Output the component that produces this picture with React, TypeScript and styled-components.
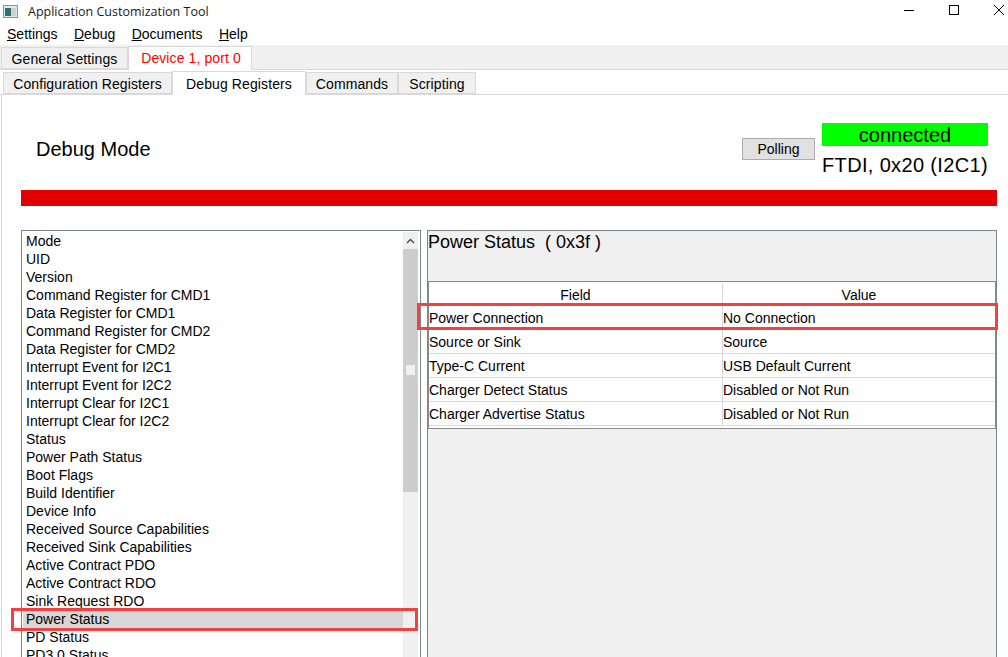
import styled, { createGlobalStyle } from "styled-components";

const GlobalStyle = createGlobalStyle`
  html, body {
    margin: 0;
    height: 657px;
    overflow: hidden;
    background: #fff;
    font-family: "Liberation Sans", Arial, sans-serif;
    font-size: 14px;
    color: #000;
  }
`;

const Window = styled.div`
  width: 1008px;
  height: 657px;
  display: flex;
  flex-direction: column;
  overflow: hidden;
`;

const TitleBar = styled.div`
  height: 22px;
  flex: none;
  display: flex;
  align-items: center;
  padding-left: 3px;
`;

const TitleText = styled.span`
  margin-left: 10px;
  font-family: "Open Sans", sans-serif;
  font-size: 12.5px;
  color: #1a1a1a;
`;

const WindowButtons = styled.div`
  margin-left: auto;
  display: flex;
  gap: 35px;
  padding-right: 4px;
  margin-top: -1px;
`;

const MenuBar = styled.div`
  height: 23px;
  flex: none;
  display: flex;
  align-items: center;
  gap: 16.4px;
  padding-left: 7px;
`;

const MenuItem = styled.span`
  font-size: 14px;
`;

const TopTabs = styled.div`
  height: 24px;
  flex: none;
  display: flex;
  align-items: flex-end;
  padding-left: 1px;
  background: #f0f0f0;
  border-bottom: 1px solid #d9d9d9;
`;

const TopTab = styled.div<{ $active?: boolean }>`
  box-sizing: border-box;
  height: ${(p) => (p.$active ? "24px" : "22px")};
  width: ${(p) => (p.$active ? "124px" : "127px")};
  margin-bottom: ${(p) => (p.$active ? "-1px" : "0")};
  padding: ${(p) => (p.$active ? "0 0 2px 2px" : "2px 0 0")};
  display: flex;
  align-items: center;
  justify-content: center;
  letter-spacing: 0.1px;
  background: ${(p) => (p.$active ? "#fff" : "#f0f0f0")};
  color: ${(p) => (p.$active ? "#ff0000" : "#000")};
  border: 1px solid #d9d9d9;
  border-bottom: ${(p) => (p.$active ? "0" : "1px solid #d9d9d9")};
`;

const SubTabs = styled.div`
  height: 24px;
  flex: none;
  display: flex;
  align-items: flex-end;
  padding-left: 3px;
  border-bottom: 1px solid #d9d9d9;
`;

const SubTab = styled.div<{ $active?: boolean; $width: number }>`
  box-sizing: border-box;
  width: ${(p) => p.$width}px;
  height: ${(p) => (p.$active ? "24px" : "22px")};
  margin-bottom: ${(p) => (p.$active ? "-1px" : "0")};
  padding-top: ${(p) => (p.$active ? "0" : "2px")};
  display: flex;
  align-items: center;
  justify-content: center;
  letter-spacing: 0.1px;
  background: ${(p) => (p.$active ? "#fff" : "#f0f0f0")};
  border: 1px solid #d9d9d9;
  border-bottom: ${(p) => (p.$active ? "0" : "1px solid #d9d9d9")};
`;

const Content = styled.div`
  flex: 1;
  min-height: 0;
  margin-left: 1px;
  padding: 0 11px 0 19px;
  border-left: 1px solid #d9d9d9;
`;

const Header = styled.div`
  height: 95px;
  display: flex;
  align-items: flex-start;
`;

const Heading = styled.h1`
  margin: 41px auto 0 15px;
  font-size: 20px;
  line-height: 26px;
  font-weight: 400;
`;

const PollButton = styled.button`
  box-sizing: border-box;
  width: 73px;
  height: 22px;
  margin-top: 43px;
  padding: 0;
  background: #e1e1e1;
  border: 1px solid #adadad;
  font-family: inherit;
  font-size: 14px;
  color: #000;
`;

const StatusBox = styled.div`
  width: 166px;
  margin: 28px 9px 0 7px;
`;

const Connected = styled.div`
  height: 23px;
  background: #00ff00;
  text-align: center;
  font-size: 20px;
  line-height: 24px;
`;

const Adapter = styled.div`
  margin-top: 4px;
  font-size: 20px;
  line-height: 30px;
  letter-spacing: 0.35px;
  white-space: nowrap;
`;

const RedBar = styled.div`
  height: 16px;
  background: #e00000;
`;

const Split = styled.div`
  display: flex;
  gap: 6px;
  margin-top: 24px;
  height: 500px;
`;

const ListBox = styled.div`
  box-sizing: border-box;
  width: 400px;
  padding: 1px;
  display: flex;
  border: 1px solid #7f8488;
  border-bottom: 0;
`;

const List = styled.div`
  flex: 1;
  min-width: 0;
`;

const ListRow = styled.div<{ $selected?: boolean }>`
  position: relative;
  height: 18px;
  line-height: 18px;
  padding-left: 3px;
  background: ${(p) => (p.$selected ? "#d7d7d7" : "transparent")};
`;

const Callout = styled.div`
  position: absolute;
  box-sizing: border-box;
  border: 3px solid #f44040;
  pointer-events: none;
`;

const ListCallout = styled(Callout)`
  left: -12px;
  right: -15px;
  top: -2px;
  bottom: -3px;
`;

const ScrollTrack = styled.div`
  width: 15px;
  margin-right: 1px;
  flex: none;
  display: flex;
  flex-direction: column;
  background: #f0f0f0;
`;

const ScrollArrow = styled.div`
  height: 17px;
  flex: none;
  display: flex;
  align-items: center;
  justify-content: center;
`;

const ScrollThumb = styled.div`
  height: 243px;
  flex: none;
  display: flex;
  justify-content: center;
  padding-top: 116px;
  box-sizing: border-box;
  background: #cdcdcd;
`;

const ScrollMark = styled.div`
  width: 9px;
  height: 10px;
  background: #f0f0f0;
`;

const Panel = styled.div`
  box-sizing: border-box;
  flex: 1;
  background: #f0f0f0;
  border: 1px solid #7f8488;
  border-bottom: 0;
`;

const PanelTitle = styled.div`
  height: 50px;
  font-size: 18px;
  line-height: 22px;
  white-space: pre;
`;

const Table = styled.div`
  box-sizing: border-box;
  height: 148px;
  padding-top: 1px;
  background: #fff;
  border: 1px solid #8a8a8a;
`;

const TableRow = styled.div<{ $header?: boolean }>`
  position: relative;
  box-sizing: border-box;
  height: ${(p) => (p.$header ? "23px" : "24px")};
  display: grid;
  grid-template-columns: 293px 1fr;
  line-height: 24px;
  text-align: ${(p) => (p.$header ? "center" : "left")};
  border-bottom: ${(p) => (p.$header ? "0" : "1px solid #d9d9d9")};
`;

const TableCell = styled.div`
  padding-left: 0;
  & + & {
    border-left: 1px solid #d9d9d9;
  }
`;

const TableCallout = styled(Callout)`
  left: -12px;
  right: -3px;
  top: -3px;
  bottom: -1px;
`;

const registers = [
  "Mode",
  "UID",
  "Version",
  "Command Register for CMD1",
  "Data Register for CMD1",
  "Command Register for CMD2",
  "Data Register for CMD2",
  "Interrupt Event for I2C1",
  "Interrupt Event for I2C2",
  "Interrupt Clear for I2C1",
  "Interrupt Clear for I2C2",
  "Status",
  "Power Path Status",
  "Boot Flags",
  "Build Identifier",
  "Device Info",
  "Received Source Capabilities",
  "Received Sink Capabilities",
  "Active Contract PDO",
  "Active Contract RDO",
  "Sink Request RDO",
  "Power Status",
  "PD Status",
  "PD3.0 Status",
];

const fields = [
  ["Power Connection", "No Connection"],
  ["Source or Sink", "Source"],
  ["Type-C Current", "USB Default Current"],
  ["Charger Detect Status", "Disabled or Not Run"],
  ["Charger Advertise Status", "Disabled or Not Run"],
];

const AppIcon = () => (
  <svg width="15" height="13" viewBox="0 0 15 13">
    <rect x="0.5" y="0.5" width="14" height="12" fill="#e4e8e8" stroke="#8c9496" />
    <rect x="2" y="3" width="6" height="8" fill="#2f6f7a" />
    <rect x="8" y="3" width="5" height="8" fill="#c9d6c4" />
  </svg>
);

const Minimize = () => (
  <svg width="10" height="11" viewBox="0 0 10 11">
    <path d="M0 5.5H10" stroke="#000" />
  </svg>
);

const Maximize = () => (
  <svg width="10" height="11" viewBox="0 0 10 11">
    <rect x="0.5" y="0.5" width="9" height="9" fill="none" stroke="#000" />
  </svg>
);

const Close = () => (
  <svg width="10" height="11" viewBox="0 0 10 11">
    <path d="M0 0L10 10M10 0L0 10" stroke="#000" />
  </svg>
);

export default function App() {
  return (
    <Window>
      <GlobalStyle />
      <TitleBar>
        <AppIcon />
        <TitleText>Application Customization Tool</TitleText>
        <WindowButtons>
          <Minimize />
          <Maximize />
          <Close />
        </WindowButtons>
      </TitleBar>
      <MenuBar>
        <MenuItem><u>S</u>ettings</MenuItem>
        <MenuItem><u>D</u>ebug</MenuItem>
        <MenuItem><u>D</u>ocuments</MenuItem>
        <MenuItem><u>H</u>elp</MenuItem>
      </MenuBar>
      <TopTabs>
        <TopTab>General Settings</TopTab>
        <TopTab $active>Device 1, port 0</TopTab>
      </TopTabs>
      <SubTabs>
        <SubTab $width={169}>Configuration Registers</SubTab>
        <SubTab $width={134} $active>Debug Registers</SubTab>
        <SubTab $width={92}>Commands</SubTab>
        <SubTab $width={78}>Scripting</SubTab>
      </SubTabs>
      <Content>
        <Header>
          <Heading>Debug Mode</Heading>
          <PollButton>Polling</PollButton>
          <StatusBox>
            <Connected>connected</Connected>
            <Adapter>FTDI, 0x20 (I2C1)</Adapter>
          </StatusBox>
        </Header>
        <RedBar />
        <Split>
          <ListBox>
            <List>
              {registers.map((name) => (
                <ListRow key={name} $selected={name === "Power Status"}>
                  {name}
                  {name === "Power Status" && <ListCallout />}
                </ListRow>
              ))}
            </List>
            <ScrollTrack>
              <ScrollArrow>
                <svg width="9" height="6" viewBox="0 0 9 6">
                  <path d="M1 5L4.5 1.5L8 5" fill="none" stroke="#505050" strokeWidth="1.5" />
                </svg>
              </ScrollArrow>
              <ScrollThumb>
                <ScrollMark />
              </ScrollThumb>
            </ScrollTrack>
          </ListBox>
          <Panel>
            <PanelTitle>{"Power Status  ( 0x3f )"}</PanelTitle>
            <Table>
              <TableRow $header>
                <TableCell>Field</TableCell>
                <TableCell>Value</TableCell>
              </TableRow>
              {fields.map(([field, value], i) => (
                <TableRow key={field}>
                  <TableCell>{field}</TableCell>
                  <TableCell>{value}</TableCell>
                  {i === 0 && <TableCallout />}
                </TableRow>
              ))}
            </Table>
          </Panel>
        </Split>
      </Content>
    </Window>
  );
}
